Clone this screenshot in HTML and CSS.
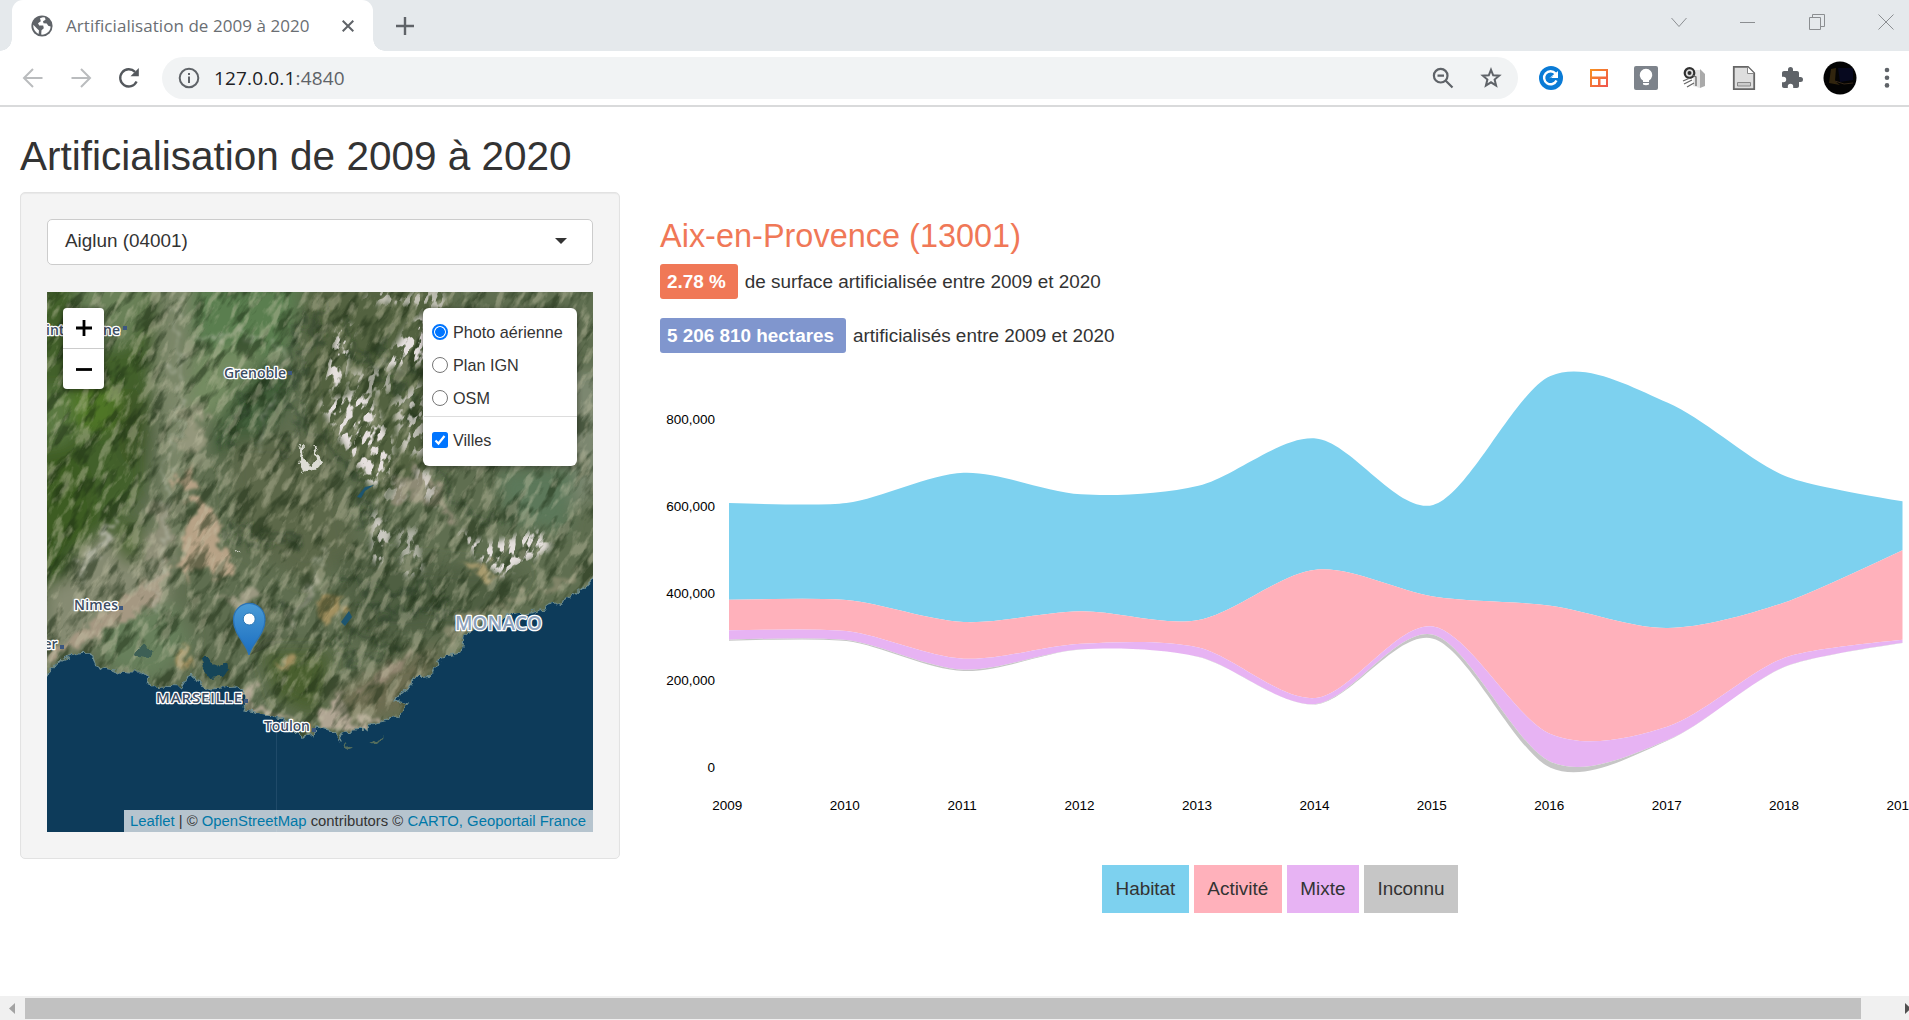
FILE: index.html
```html
<!DOCTYPE html>
<html lang="fr">
<head>
<meta charset="utf-8">
<title>Artificialisation de 2009 à 2020</title>
<link rel="stylesheet" href="styles.css">
</head>
<body>
<header class="browser">
  <div class="tabstrip">
    <div class="tab">
      <svg class="globe" width="22" height="22" viewBox="0 0 22 22"><circle cx="11" cy="11" r="10.6" fill="#5f6368"/><path d="M12 2.3 9 3.2 9.8 6.2 7 8.2 8.2 10.5 12.2 10.6 12.8 13.2 10.5 15.2 10.2 19.6C15 20 19.5 16.5 19.6 11.5L17.2 10.8 15.8 8.6 12.5 8.2 12 6.2 14.5 4.8 14 2.6ZM2.3 9.8C2 14.5 4.7 17.5 7.6 19L8 15.5 5.5 13Z" fill="#fff"/></svg>
      <span class="tab-title">Artificialisation de 2009 à 2020</span>
      <svg class="tab-close" width="12" height="12" viewBox="0 0 12 12"><path d="M.7.7 11.3 11.3M11.3.7.7 11.3" stroke="#5f6368" stroke-width="2"/></svg>
    </div>
    <svg class="new-tab" width="18" height="18" viewBox="0 0 18 18"><path d="M9 0V18M0 9H18" stroke="#5f6368" stroke-width="2.4"/></svg>
    <div class="window-buttons">
      <svg width="16" height="16" viewBox="0 0 16 16"><path d="M.5 4 8 12.5 15.5 4" class="thin"/></svg>
      <svg width="16" height="16" viewBox="0 0 16 16"><path d="M0 8.5H15" class="thin"/></svg>
      <svg width="16" height="16" viewBox="0 0 16 16"><path d="M.5 3.5H11.5V15.5H.5ZM3.500 3.500V.5H15.500V12.500H11.500" class="thin"/></svg>
      <svg width="16" height="16" viewBox="0 0 16 16"><path d="M.5.5 15.500 15.500M15.500.5.5 15.500" class="thin"/></svg>
    </div>
  </div>
  <div class="toolbar">
    <div class="nav">
      <svg width="22" height="22" viewBox="0 0 22 22"><path d="M20.500 11H2.500M11 2 2 11 11 20" fill="none" stroke="#babcbe" stroke-width="2"/></svg>
      <svg width="22" height="22" viewBox="0 0 22 22"><path d="M1.500 11H19.500M11 2 20 11 11 20" fill="none" stroke="#babcbe" stroke-width="2"/></svg>
      <svg width="22" height="22" viewBox="0 0 22 22"><path d="M18.600 14.500A8.600 8.600 0 1 1 17 4.900" fill="none" stroke="#54585d" stroke-width="2.300"/><path d="M20.800 1V9.300H12.500Z" fill="#54585d"/></svg>
    </div>
    <div class="address">
      <svg width="22" height="22" viewBox="0 0 22 22"><circle cx="11" cy="11" r="9.300" fill="none" stroke="#5f6368" stroke-width="2"/><path d="M11 9.500V16M11 6V8" stroke="#5f6368" stroke-width="2"/></svg>
      <span class="url">127.0.0.1<span class="port">:4840</span></span>
      <svg class="lens" width="22" height="22" viewBox="0 0 22 22"><circle cx="8.700" cy="8.700" r="6.800" fill="none" stroke="#5f6368" stroke-width="2.200"/><path d="M13.500 13.500 20.500 20.500M5.500 8.700H12" stroke="#5f6368" stroke-width="2.200"/></svg>
      <svg width="22" height="22" viewBox="0 0 22 22"><path d="M11 2.800 13.200 8.300 19.200 8.700 14.600 12.600 16.100 18.600 11 15.300 5.900 18.600 7.400 12.600 2.800 8.700 8.800 8.300Z" fill="none" stroke="#5f6368" stroke-width="2"/></svg>
    </div>
    <div class="extensions">
      <svg width="24" height="24" viewBox="0 0 24 24"><circle cx="12" cy="12" r="12" fill="#0a7bd6"/><path d="M17.500 14.500A6.500 6.500 0 1 1 16.500 7.500" fill="none" stroke="#fff" stroke-width="2.400"/><path d="M19 5V12H12L14.500 9.700 9.800 12.600" fill="#fff"/></svg>
      <svg width="24" height="24" viewBox="0 0 24 24"><defs><linearGradient id="warm" x1="0" y1="0" x2="1" y2="1"><stop offset="0" stop-color="#f7931e"/><stop offset="1" stop-color="#f0524f"/></linearGradient></defs><path fill="url(#warm)" fill-rule="evenodd" d="M3 3H21V21H3ZM5 5V10.500H19V5ZM5 13V19H11V13ZM13.500 13V19H19V13Z"/></svg>
      <svg width="24" height="24" viewBox="0 0 24 24"><rect width="24" height="24" rx="2" fill="#7d838b"/><path d="M9 16V14.500A6.200 6.200 0 1 1 15 14.500V16ZM9 17H15V18.500Q12 20 9 18.500Z" fill="#fff"/></svg>
      <svg width="26" height="24" viewBox="0 0 26 24"><path d="M12 4H18V22L11 20Z" fill="#e3e3e3"/><path d="M18 3 23 8V20L18 22Z" fill="#aaa"/><circle cx="7.500" cy="7" r="4.800" fill="#ddd" stroke="#303030" stroke-width="2.200"/><circle cx="7.500" cy="7" r="2" fill="#303030"/><path d="M1 15 8 12M2 18 10 14M5 21 12 17M10 9 14 11V20" fill="none" stroke="#666" stroke-width="1.300"/></svg>
      <svg width="24" height="26" viewBox="0 0 24 26"><path d="M1.800 1.800H16L22.200 8V24.200H1.800Z" fill="#dedede" stroke="#666" stroke-width="1.800"/><path d="M15.500 2V8.500H22" fill="#fff" stroke="#888"/><path d="M5.500 17.500H18.500V21H5.500Z" fill="#ccc" stroke="#888"/></svg>
      <svg width="24" height="24" viewBox="0 0 24 24"><path d="M20.500 11H19V7C19 5.900 18.100 5 17 5H13V3.500A2.500 2.500 0 0 0 8 3.500V5H4C2.900 5 2 5.900 2 7V10.800H3.500A2.700 2.700 0 0 1 3.500 16.200H2V20C2 21.100 2.900 22 4 22H7.800V20.500A2.700 2.700 0 0 1 13.200 20.500V22H17C18.100 22 19 21.100 19 20V16H20.500A2.500 2.500 0 0 0 20.500 11Z" fill="#5f6368"/></svg>
      <svg class="avatar" width="34" height="34" viewBox="0 0 34 34"><defs><clipPath id="face"><circle cx="17" cy="17" r="16.500"/></clipPath></defs><g clip-path="url(#face)"><rect width="34" height="34" fill="#040404"/><path d="M15 7H30V19L17 21Z" fill="#07091f"/><path d="M8 8 13 7 12 20 17 24 6 22Z" fill="#493714" opacity=".65"/><path d="M12 20 21 23 30 22" stroke="#352719" fill="none"/></g></svg>
      <svg width="6" height="22" viewBox="0 0 6 22"><g fill="#5f6368"><circle cx="3" cy="3" r="2.300"/><circle cx="3" cy="10.700" r="2.300"/><circle cx="3" cy="18.400" r="2.300"/></g></svg>
    </div>
  </div>
</header>

<main class="page">
  <h2 class="page-title">Artificialisation de 2009 à 2020</h2>
  <div class="columns">
    <aside class="well">
      <div class="select"><span>Aiglun (04001)</span><i class="caret"></i></div>
      <div class="map">
        <svg class="tiles" width="546" height="540" viewBox="0 0 546 540">
          <defs>
            <filter id="soft" x="-20%" y="-20%" width="140%" height="140%"><feGaussianBlur stdDeviation="8"/></filter>
            <filter id="soft2" x="-5%" y="-5%" width="110%" height="110%">
              <feTurbulence type="fractalNoise" baseFrequency=".07" numOctaves="4" seed="6"/>
              <feDisplacementMap in="SourceGraphic" scale="34" xChannelSelector="R" yChannelSelector="G"/>
              <feGaussianBlur stdDeviation="1.500"/>
            </filter>
            <filter id="feather" x="-5%" y="-5%" width="110%" height="110%"><feGaussianBlur stdDeviation="3"/></filter>
            <filter id="relief" x="0" y="0" width="100%" height="100%" color-interpolation-filters="sRGB">
              <feTurbulence type="fractalNoise" baseFrequency=".09 .028" numOctaves="4" seed="11"/>
              <feColorMatrix values="0 0 0 0 .1  0 0 0 0 .17  0 0 0 0 .07  5 0 0 0 -2.500"/>
            </filter>
            <filter id="glow" x="0" y="0" width="100%" height="100%" color-interpolation-filters="sRGB">
              <feTurbulence type="fractalNoise" baseFrequency=".11 .04" numOctaves="4" seed="4"/>
              <feColorMatrix values="0 0 0 0 .8  0 0 0 0 .79  0 0 0 0 .68  0 5 0 0 -2.500"/>
            </filter>
            <filter id="snow" x="0" y="0" width="100%" height="100%" color-interpolation-filters="sRGB">
              <feTurbulence type="fractalNoise" baseFrequency=".16 .07" numOctaves="3" seed="23"/>
              <feColorMatrix values="0 0 0 0 .9  0 0 0 0 .88  0 0 0 0 .87  10 0 0 0 -5.000"/>
            </filter>
            <filter id="coast" x="-5%" y="-5%" width="110%" height="110%">
              <feTurbulence type="fractalNoise" baseFrequency=".12" numOctaves="3" seed="2"/>
              <feDisplacementMap in="SourceGraphic" scale="9" xChannelSelector="R" yChannelSelector="G"/>
            </filter>
            <mask id="peaks"><g filter="url(#feather)" fill="#fff">
              <path d="M278 85 292 30 306 34 296 95 280 98Z"/><path d="M335 75 360 35 378 20 382 70 345 75Z"/>
              <path d="M272 110 320 100 345 150 345 185 325 195 300 160Z"/><path d="M315 10 330-5 350 5 395-5 400 20 380 15Z" opacity=".7"/>
              <path d="M345 110 375 90 380 165 355 160Z" opacity=".7"/><path d="M368 175 385 180 392 215 375 205Z" opacity=".7"/>
              <path d="M410 238 440 252 490 238 505 255 470 275 455 285 430 265Z"/><path d="M325 215 345 240 335 275 325 268Z" opacity=".8"/>
              <path d="M350 240 370 235 376 280 358 285Z" opacity=".6"/><path d="M335 195 355 190 360 208 330 212Z" opacity=".4"/>
              <path d="M305 80 340 75 350 100 300 105Z" opacity=".6"/>
            </g></mask>
            <clipPath id="frame"><rect width="546" height="540"/></clipPath>
          </defs>
          <rect width="546" height="540" fill="#5f6e50"/>
          <g filter="url(#soft)">
            <path d="M-20-20H110L105 100 95 200 60 240 10 300-20 310Z" fill="#42602a"/>
            <path d="M25-20H115L85 50 40 60Z" fill="#6b8159"/>
            <ellipse cx="50" cy="115" rx="32" ry="24" fill="#507628"/>
            <ellipse cx="8" cy="125" rx="16" ry="30" fill="#5c7a42"/>
            <ellipse cx="15" cy="220" rx="30" ry="65" fill="#3c5c20"/>
            <ellipse cx="85" cy="135" rx="14" ry="40" fill="#3e5427"/>
            <path d="M118-10H145L140 90 160 145 140 180 130 270 105 270 118 150 105 80Z" fill="#7b8769"/>
            <path d="M145-10H255L240 60 200 80 145 50Z" fill="#5a7e50"/>
            <path d="M145 60 215 55 205 95 165 130 142 110Z" fill="#748c62"/>
            <path d="M215 65 245 80 235 120 190 180 160 150 180 110Z" fill="#425f3b"/>
            <path d="M258-10H400L410 160 330 210 265 130 255 70Z" fill="#52623f"/>
            <path d="M520 80H560V200L515 220Z" fill="#7b876f"/>
            <path d="M450 180 530 175 520 240 460 230Z" fill="#5b785a"/>
            <path d="M180 150 280 140 310 260 260 290 190 250Z" fill="#5c684a"/>
            <path d="M0 290 70 230 125 250 120 330 60 350 0 365Z" fill="#868b72"/>
            <path d="M60 235 95 225 95 270 75 270Z" fill="#4c6533"/>
            <path d="M0 240 30 250 25 285 0 295Z" fill="#395620"/>
            <path d="M45 325 125 310 145 350 110 390 60 375Z" fill="#67805c"/>
            <path d="M215 360 285 360 268 425 230 405Z" fill="#485f2e"/>
            <path d="M290 260 480 280 430 340 310 350Z" fill="#505f42"/>
            <path d="M285 400 350 370 400 350 360 420 300 435Z" fill="#6d6d51"/>
          </g>
          <g filter="url(#soft2)">
            <path d="M128 182 142 174 150 188 130 200ZM146 210 156 208 174 232 168 250 184 268 180 284 158 282 136 286 132 262Z" fill="#b7a286"/>
            <path d="M105 215 118 205 128 250 112 285 100 260Z" fill="#8f8f78"/>
            <path d="M60 232 72 224 52 262 34 280 32 272Z" fill="#a5a796"/>
            <path d="M113 280 125 265 118 300 95 318 45 346 5 368 0 358 50 328Z" fill="#a59882"/>
            <path d="M267 315 297 302 300 320 280 328ZM228 370 245 367 247 378 232 378ZM130 358 142 355 145 375 132 370Z" fill="#a39161"/>
            <path d="M190 395 205 395 215 415 240 425 230 430 197 415ZM280 415 290 405 305 425 340 425 320 436 268 440Z" fill="#b0a593"/>
            <path d="M170 310 200 295 220 305 190 315Z" fill="#9a9780"/>
            <path d="M272 275 260 310 245 335 241 330 255 300Z" fill="#8b8f78"/>
            <path d="M545 270 520 293 465 312 425 330 405 352 395 345 420 320 490 300Z" fill="#828569"/>
            <path d="M370 360 345 385 310 403 340 370Z" fill="#928671"/>
            <path d="M350 190 375 175 395 215 415 235 395 225 370 205 340 212Z" fill="#8e8a75"/>
            <path d="M410 265 440 275 458 285 430 282Z" fill="#a89b6e"/>
            <path d="M135 110 160 130 150 165 132 160Z" fill="#94977c"/>
          </g>
          <g fill="none" stroke-linecap="round" filter="url(#soft2)">
            <path d="M226 110 217 125 215 155 211 160M132 0 131 50 133 105 128 145 120 180 117 220 119 270 105 290 110 320M68 228 40 265 30 290M228 50 237 75 233 80M275 260 262 305 247 330M150 50 175 43 215 45" stroke="#b6baa9" stroke-width="3" opacity=".6"/>
            <path d="M258 20 240 65 200 110 178 155M265 30 255 75 225 115 210 150M278 15 262 60 250 90M300 20 306 60 320 75 380 82M345 40 325 62 345 70M235 100 250 130 240 160M255 110 262 140 300 175M330 90 360 95 368 130M300 170 320 205 310 240M390 180 420 215 450 230M180 240 215 238 250 245M190 250 220 252 255 250M300 290 345 300 395 295M310 310 355 318 400 310M330 330 380 320 420 322M200 320 240 318 262 308M280 350 315 345 350 352M290 370 330 365 345 358" stroke="#24371f" stroke-width="5" opacity=".5"/>
          </g>
          <g clip-path="url(#frame)">
            <rect x="-150" y="-150" width="850" height="850" transform="rotate(33 273 270)" filter="url(#relief)" opacity=".5"/>
            <rect x="-150" y="-150" width="850" height="850" transform="rotate(27 273 270)" filter="url(#glow)" opacity=".38"/>
          </g>
          <g mask="url(#peaks)"><rect x="-150" y="-150" width="850" height="850" transform="rotate(24 273 270)" filter="url(#snow)"/></g>
          <path d="M255 150 252 168 258 180 270 178 274 170 267 153 271 170 262 174 256 166ZM186 257 193 261" stroke="#dcdcd4" fill="#dcdcd4" filter="url(#coast)"/>
          <path d="M310 205 318 195 327 193 318 199 314 206ZM294 330 302 319 305 325 298 334Z" fill="#1d5570"/>
          <g filter="url(#coast)" fill="#0a3a5a">
            <path d="M0 383 14 368 30 362 44 361 47 373 61 378 80 380 96 380 102 385 100 391 110 395 133 396 139 385 147 383 153 393 165 397 188 395 195 401 200 408 196 418 210 420 222 423 235 426 243 435 255 445 267 443 269 435 286 440 293 450 296 440 320 438 324 431 351 425 360 411 347 408 361 396 369 385 386 383 394 365 414 361 416 346 426 338 447 330 463 323 484 320 508 313 528 303 541 293 550 282 570 280V560H-20V390Z" stroke="#6f8d8e" stroke-width="1.200"/>
            <path d="M153 365 163 365 169 375 180 370 181 376 175 385 163 386 157 378Z" fill="#164458"/>
            <path d="M88 358 98 354 107 359 103 365 90 364Z" fill="#3c5f55"/>
            <path d="M298 450 305 455 300 457ZM322 451 337 445 328 454Z" fill="#536c5b"/>
          </g>
          <path d="M229.500 440V540" stroke="#1f4a69"/>
          <g class="city">
            <g fill="#3c577f"><rect x="76" y="34" width="4" height="4"/><rect x="241" y="79" width="4" height="4"/><rect x="72" y="314" width="4" height="4"/><rect x="13" y="353" width="4" height="4"/><rect x="197" y="407" width="4" height="4"/><rect x="265" y="436" width="4" height="4"/></g>
            <text x="73" y="42.500" text-anchor="end">Saint-Étienne</text>
            <text x="177" y="86" textLength="62">Grenoble</text>
            <text x="27" y="318" textLength="44">Nimes</text>
            <text x="10.500" y="357" text-anchor="end">Montpellier</text>
            <text x="109" y="410.500" textLength="86" class="upper">MARSEILLE</text>
            <text x="217" y="438.500" textLength="46">Toulon</text>
            <text x="408" y="337.500" textLength="87" class="country">MONACO</text>
          </g>
          <defs><linearGradient id="pin" x1="0" y1="0" x2="0" y2="1"><stop offset="0" stop-color="#4a9bd6"/><stop offset="1" stop-color="#1a6dc0"/></linearGradient><linearGradient id="shade"><stop offset="0" stop-opacity=".4"/><stop offset="1" stop-opacity="0"/></linearGradient></defs>
          <path d="M203 363 222 342Q234 333 240 339Q245 346 230 352Z" fill="url(#shade)" opacity=".7"/>
          <path d="M202 363C200 352 186.500 343 186.500 327.500A15.700 16 0 0 1 218 327.500C218 343 204 352 202 363Z" fill="url(#pin)" stroke="#2b73b5" stroke-width="1.300"/>
          <circle cx="202.200" cy="327" r="6" fill="#fff" stroke="#2d78b5"/>
        </svg>
        <div class="zoom"><b><svg width="18" height="18" viewBox="0 0 18 18"><path d="M9 1V17M1 9H17" stroke="#000" stroke-width="2.800"/></svg></b><b><svg width="18" height="18" viewBox="0 0 18 18"><path d="M1 9.500H17" stroke="#000" stroke-width="2.800"/></svg></b></div>
        <div class="layers">
          <label><i class="radio on"></i>Photo aérienne</label>
          <label><i class="radio"></i>Plan IGN</label>
          <label><i class="radio"></i>OSM</label>
          <hr>
          <label><svg width="16" height="16" viewBox="0 0 16 16"><rect width="16" height="16" rx="2.500" fill="#0075ff"/><path d="M3.500 8.500 6.500 11.500 12.500 4" fill="none" stroke="#fff" stroke-width="2.200"/></svg>Villes</label>
        </div>
        <div class="credit"><a>Leaflet</a> | © <a>OpenStreetMap</a> contributors © <a>CARTO, Geoportail France</a></div>
      </div>
    </aside>
    <section class="results">
      <h3 class="commune">Aix-en-Provence (13001)</h3>
      <p class="stat"><b class="badge coral">2.78 %</b>de surface artificialisée entre 2009 et 2020</p>
      <p class="stat"><b class="badge blue">5 206 810 hectares</b>artificialisés entre 2009 et 2020</p>
      <svg id="stream" class="stream" width="1249" height="480" viewBox="660 355 1249 480"></svg>
      <div class="legend"><span class="habitat">Habitat</span><span class="activite">Activité</span><span class="mixte">Mixte</span><span class="inconnu">Inconnu</span></div>
    </section>
  </div>
</main>
<footer class="scrollbar">
  <svg width="25" height="24" viewBox="0 0 25 24"><path d="M15 7V18L9 12.500Z" fill="#a3a3a3"/></svg>
  <div class="thumb"></div>
  <svg width="48" height="24" viewBox="0 0 48 24"><path d="M44 7V18L50 12.500Z" fill="#505050"/></svg>
</footer>
<script src="stream.js"></script>
</body>
</html>
```
FILE: styles.css
```css
* { box-sizing: border-box; }
body { margin: 0; width: 1909px; height: 1020px; overflow: hidden; display: flex; flex-direction: column; background: #fff; color: #333; font: 18.9px/27px "Liberation Sans", Arial, sans-serif; }
svg { display: block; flex: none; }

.browser { flex: none; height: 107px; border-bottom: 2px solid #d9dadb; font-family: "Open Sans", "Noto Sans", sans-serif; }
.tabstrip { height: 51px; display: flex; align-items: center; background: #e5e9ec; padding-left: 12px; }
.tab { position: relative; width: 361px; height: 51px; display: flex; align-items: center; padding: 0 19px; background: #fff; border-radius: 11px 11px 0 0; }
.tab::before, .tab::after { content: ""; position: absolute; bottom: 0; width: 12px; height: 12px; }
.tab::before { left: -12px; background: radial-gradient(circle at 0 0, #e5e9ec 11.5px, #fff 12px); }
.tab::after { right: -12px; background: radial-gradient(circle at 100% 0, #e5e9ec 11.5px, #fff 12px); }
.tab-title { flex: none; margin-left: 13px; width: 243px; font-size: 17px; letter-spacing: .05px; white-space: nowrap; color: #6a6e73; }
.tab-close { margin-left: 33px; }
.new-tab { margin-left: 23px; }
.window-buttons { margin: -8px 15px 0 auto; display: flex; gap: 53px; }
.thin { fill: none; stroke: #8b8e91; }
.toolbar { height: 54px; display: flex; align-items: center; padding: 0 19px 0 22px; }
.nav { display: flex; gap: 26px; width: 140px; }
.address { width: 1356px; height: 42px; border-radius: 21px; background: #f1f3f4; display: flex; align-items: center; padding: 0 16px; }
.url { margin-left: 14px; font-size: 19px; letter-spacing: .15px; color: #202124; }
.port { color: #5f6368; }
.lens { margin: 0 26px 0 auto; }
.extensions { flex: 1; display: flex; align-items: center; justify-content: space-between; padding-left: 21px; }
.avatar { margin: 0 3px 0 -4px; }

.page { flex: 1; min-height: 0; padding: 0 0 0 20px; }
.page-title { margin: 27px 0 13px; font-size: 40.5px; font-weight: 400; line-height: 45px; }
.columns { display: grid; grid-template-columns: 600px 1249px; gap: 40px; }
.well { height: 667px; padding: 26px; background: #f4f4f4; border: 1px solid #e2e2e2; border-radius: 5px; box-shadow: inset 0 1px 1px rgba(0,0,0,.05); }
.select { height: 46px; display: flex; align-items: center; justify-content: space-between; padding: 0 25px 3px 17px; background: #fff; border: 1px solid #ccc; border-radius: 5px; }
.caret { border: 6.500px solid transparent; border-top-color: #333; border-bottom: 0; }
.map { position: relative; height: 540px; margin-top: 27px; overflow: hidden; font-size: 16.2px; }
.city { font: 600 14px "Open Sans", sans-serif; fill: #3d4d63; stroke: #fff; stroke-width: 2.600px; paint-order: stroke; stroke-linejoin: round; }
.city rect { stroke: none; }
.upper { font-size: 15px; }
.country { font-size: 19px; fill: #8da2bd; }
.zoom { position: absolute; left: 16px; top: 16px; width: 41px; height: 81px; background: #fff; border-radius: 4px; box-shadow: 0 1px 6px rgba(0,0,0,.55); }
.zoom b { display: grid; place-items: center; height: 40px; }
.zoom b + b { border-top: 1px solid #ccc; height: 41px; }
.layers { position: absolute; right: 16px; top: 16px; width: 154px; height: 158px; padding: 8px 0 0; background: #fff; border-radius: 6px; box-shadow: 0 1px 6px rgba(0,0,0,.4); }
.layers label { display: flex; align-items: center; gap: 5px; height: 33px; padding-left: 9px; }
.layers hr { margin: 1px 0 7px 1px; border: 0; border-top: 1px solid #ddd; }
.layers label > :first-child { margin-bottom: 2px; }
.radio { width: 16px; height: 16px; border: 1.400px solid #767676; border-radius: 50%; }
.radio.on { border: 2px solid #0075ff; background: radial-gradient(#0075ff 4.500px, #fff 5.200px); }
.credit { position: absolute; right: 0; bottom: 0; height: 22px; width: 469px; padding-left: 6px; background: rgba(255,255,255,.7); font-size: 14.85px; line-height: 22px; white-space: nowrap; }
.credit a { color: #0078a8; }

.results { padding-top: 24px; }
.commune { margin: 0 0 8px; font-size: 32.4px; letter-spacing: .04px; line-height: 40px; font-weight: 400; color: #f07857; }
.stat { margin: 0 0 19px; height: 35px; display: flex; align-items: center; gap: 7px; }
.badge { height: 35px; line-height: 35px; padding: 0 12px 0 7px; border-radius: 3px; color: #fff; }
.coral { background: #f07857; }
.blue { background: #8096ce; }
.stream { margin-top: -17px; overflow: hidden; }
.stream text { font-size: 13.5px; fill: #000; }
.legend { display: flex; gap: 5px; margin: 30px 0 0 442px; }
.legend span { height: 48px; line-height: 47px; padding: 0 13.5px; }
.habitat { background: #7dd1ef; fill: #7dd1ef; }
.activite { background: #ffb1bb; fill: #ffb1bb; }
.mixte { background: #e7b3f3; fill: #e7b3f3; }
.inconnu { background: #c6c6c6; fill: #c6c6c6; }

.scrollbar { flex: none; height: 24px; display: flex; background: #f0f0f0; }
.thumb { flex: 1; margin: 2px 0 1px; background: #c1c1c1; }
```
FILE: stream.js
```js
// Stacked stream chart: each edge separates two consecutive layers.
const x0 = 729, step = 117.35, pull = 0.15;
const edges = [
  [503, 503, 472.7, 494.3, 485.7, 438.5, 505, 376, 402.7, 476, 501.3],
  [599.8, 600, 622, 611.3, 620, 569.7, 596.5, 605.7, 628, 602.3, 550.3],
  [630.3, 631, 658.7, 643.7, 647.5, 698, 626.5, 734, 726.5, 657.5, 639.7],
  [639.7, 640, 669.7, 649.2, 656.8, 704, 634.7, 761.7, 740, 666.5, 642.8],
  [640.7, 641, 671, 649.5, 657, 704.4, 638.7, 767.7, 740.6, 666.7, 643]
];
const names = ["habitat", "activite", "mixte", "inconnu"];
const points = edge => edge.map((y, i) => [x0 + i * step, y]);

// Cardinal spline through the points, without the initial move.
function spline(p) {
  const n = p.length - 1;
  const t = p.map((_, i) => i && i < n ? [pull * (p[i + 1][0] - p[i - 1][0]), pull * (p[i + 1][1] - p[i - 1][1])] : [0, 0]);
  let d = `Q${p[1][0] - t[1][0] * 2 / 3},${p[1][1] - t[1][1] * 2 / 3} ${p[1]}`;
  for (let i = 2; i < n; i++) {
    d += `C${p[i - 1][0] + t[i - 1][0]},${p[i - 1][1] + t[i - 1][1]} ${p[i][0] - t[i][0]},${p[i][1] - t[i][1]} ${p[i]}`;
  }
  return d + `Q${p[n - 1][0] + t[n - 1][0] * 2 / 3},${p[n - 1][1] + t[n - 1][1] * 2 / 3} ${p[n]}`;
}

let out = "";
names.forEach((name, i) => {
  const top = points(edges[i]), low = points(edges[i + 1]).reverse();
  out += `<path class="${name}" d="M${top[0]}${spline(top)}L${low[0]}${spline(low)}Z"/>`;
});
["800,000", "600,000", "400,000", "200,000", "0"].forEach((label, i) => {
  out += `<text x="715" y="${424 + i * 87}" text-anchor="end">${label}</text>`;
});
for (let i = 0; i < 11; i++) {
  out += `<text x="${727.3 + i * 117.42}" y="810" text-anchor="middle">${2009 + i}</text>`;
}
document.getElementById("stream").innerHTML = out;
```
